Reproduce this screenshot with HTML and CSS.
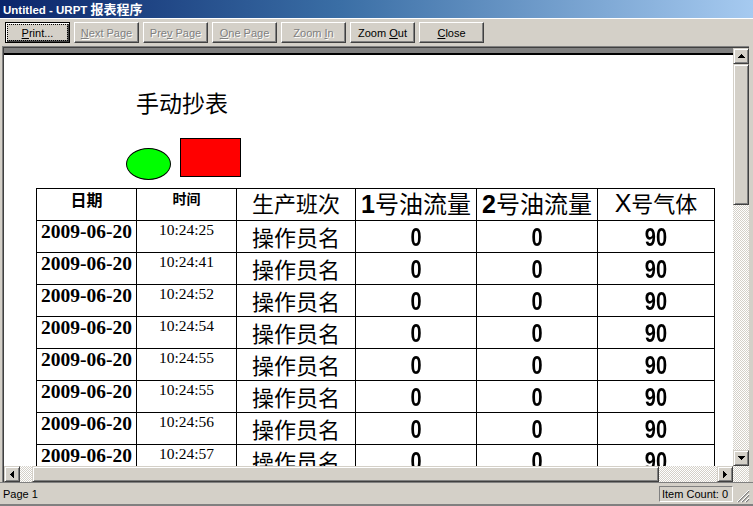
FILE: index.html
```html
<!DOCTYPE html>
<html lang="zh-CN">
<head>
    <meta charset="UTF-8">
    <title>Untitled - URPT 报表程序</title>
    <link rel="stylesheet" href="styles.css">
</head>
<body>
    <div class="window">
        <div class="titlebar">Untitled - URPT <span class="cjk">报表程序</span></div>

        <div class="toolbar">
            <button class="btn default"><u>P</u>rint...</button>
            <button class="btn" disabled><u>N</u>ext Page</button>
            <button class="btn" disabled>Pre<u>v</u> Page</button>
            <button class="btn" disabled><u>O</u>ne Page</button>
            <button class="btn" disabled>Zoom <u>I</u>n</button>
            <button class="btn">Zoom <u>O</u>ut</button>
            <button class="btn"><u>C</u>lose</button>
        </div>

        <div class="viewer">
            <div class="preview">
                <div class="band"></div>
                <div class="page">
                    <h1 class="report-title">手动抄表</h1>
                    <div class="shapes">
                        <div class="ellipse"></div>
                        <div class="rect"></div>
                    </div>
                    <div class="report">
                        <div class="h-date">日期</div>
                        <div class="h-time">时间</div>
                        <div class="h-cjk">生产班次</div>
                        <div class="h-flow"><b>1</b>号油流量</div>
                        <div class="h-flow"><b>2</b>号油流量</div>
                        <div class="h-cjk"><span class="latin">X</span>号气体</div>

                        <div class="date">2009-06-20</div><div class="time">10:24:25</div><div class="name">操作员名</div><div class="num"><span>0</span></div><div class="num"><span>0</span></div><div class="num"><span>90</span></div>
                        <div class="date">2009-06-20</div><div class="time">10:24:41</div><div class="name">操作员名</div><div class="num"><span>0</span></div><div class="num"><span>0</span></div><div class="num"><span>90</span></div>
                        <div class="date">2009-06-20</div><div class="time">10:24:52</div><div class="name">操作员名</div><div class="num"><span>0</span></div><div class="num"><span>0</span></div><div class="num"><span>90</span></div>
                        <div class="date">2009-06-20</div><div class="time">10:24:54</div><div class="name">操作员名</div><div class="num"><span>0</span></div><div class="num"><span>0</span></div><div class="num"><span>90</span></div>
                        <div class="date">2009-06-20</div><div class="time">10:24:55</div><div class="name">操作员名</div><div class="num"><span>0</span></div><div class="num"><span>0</span></div><div class="num"><span>90</span></div>
                        <div class="date">2009-06-20</div><div class="time">10:24:55</div><div class="name">操作员名</div><div class="num"><span>0</span></div><div class="num"><span>0</span></div><div class="num"><span>90</span></div>
                        <div class="date">2009-06-20</div><div class="time">10:24:56</div><div class="name">操作员名</div><div class="num"><span>0</span></div><div class="num"><span>0</span></div><div class="num"><span>90</span></div>
                        <div class="date">2009-06-20</div><div class="time">10:24:57</div><div class="name">操作员名</div><div class="num"><span>0</span></div><div class="num"><span>0</span></div><div class="num"><span>90</span></div>
                    </div>
                </div>
            </div>

            <div class="vscroll">
                <div class="sb-btn"><svg width="7" height="4"><path d="M3 0h1v1h1v1h1v1h1v1H0V3h1V2h1V1h1z"/></svg></div>
                <div class="sb-thumb v-thumb"></div>
                <div class="sb-track"></div>
                <div class="sb-btn"><svg width="7" height="4"><path d="M0 0h7v1H6v1H5v1H4v1H3V3H2V2H1V1H0z"/></svg></div>
            </div>

            <div class="hscroll">
                <div class="sb-btn"><svg width="4" height="7"><path d="M3 0h1v7H3V6H2V5H1V4H0V3h1V2h1V1h1z"/></svg></div>
                <div class="sb-track h-lead"></div>
                <div class="sb-thumb h-thumb"></div>
                <div class="sb-track"></div>
                <div class="sb-btn"><svg width="4" height="7"><path d="M0 0h1v1h1v1h1v1h1v1H3v1H2v1H1v1H0z"/></svg></div>
            </div>

            <div class="sb-track corner"></div>
        </div>

        <div class="statusbar">
            <span class="status-text">Page 1</span>
            <span class="panel">Item Count: 0</span>
            <svg class="grip" width="13" height="13">
                <path d="M12 1L1 12M12 5L5 12M12 9L9 12" stroke="#808080" stroke-width="1.4"/>
                <path d="M12 0L0 12M12 4L4 12M12 8L8 12" stroke="#fff" stroke-width="1"/>
            </svg>
        </div>
    </div>
</body>
</html>
```

FILE: styles.css
```css
body {
    margin: 0;
    background: #d4d0c8;
    font-family: "Liberation Sans", Arial, sans-serif;
    font-size: 11px;
}
.window {
    width: 753px;
    height: 506px;
    display: flex;
    flex-direction: column;
    background: #d4d0c8;
    overflow: hidden;
}
.titlebar {
    height: 18px;
    line-height: 18px;
    padding-left: 3px;
    color: #fff;
    font-weight: bold;
    font-size: 11.5px;
    background: linear-gradient(to right, #0a246a, #3a6ea5 45%, #a6caf0);
    white-space: nowrap;
}
.titlebar .cjk {
    font-family: "Noto Sans CJK SC", sans-serif;
    font-size: 13px;
}

/* toolbar */
.toolbar {
    height: 28px;
    box-sizing: border-box;
    padding: 3px 0 0 5px;
    display: flex;
    gap: 4px;
    border-top: 1px solid #fff;
}
.btn {
    width: 65px;
    height: 21px;
    padding: 0;
    background: #d4d0c8;
    border: 1px solid;
    border-color: #fff #404040 #404040 #fff;
    box-shadow: inset -1px -1px #808080;
    font-family: "Liberation Sans", Arial, sans-serif;
    font-size: 11px;
    color: #000;
}
.btn:disabled {
    color: #808080;
    text-shadow: 1px 1px 0 #fff;
}
.btn.default {
    border-color: #000;
    box-shadow: inset 1px 1px #fff, inset -1px -1px #404040, inset -2px -2px #808080;
    outline: 1px dotted #000;
    outline-offset: -3px;
}

/* viewer */
.viewer {
    flex: 1;
    margin: 0 4px 0 2px;
    border-top: 1px solid #808080;
    border-left: 1px solid #808080;
    padding: 1px 0 0 1px;
    box-shadow: inset 1px 1px #404040;
    display: grid;
    grid-template-columns: 1fr 16px;
    grid-template-rows: 1fr 16px;
    min-height: 0;
}
.preview {
    background: #fff;
    overflow: hidden;
    min-height: 0;
}
.band {
    height: 5px;
    background: #808080;
    border-bottom: 2px solid #000;
}
.page {
    padding: 36px 0 0 32px;
}
.report-title {
    margin: 0 0 0 100px;
    font-family: "Noto Sans CJK SC", sans-serif;
    font-weight: normal;
    font-size: 23px;
    line-height: 23px;
    color: #000;
}
.shapes {
    display: flex;
    align-items: flex-start;
    margin: 24px 0 0 90px;
}
.ellipse {
    width: 45px;
    height: 32px;
    box-sizing: border-box;
    margin-top: 10px;
    border: 1px solid #000;
    border-radius: 50%;
    background: #00ff00;
}
.rect {
    width: 61px;
    height: 39px;
    box-sizing: border-box;
    margin-left: 9px;
    border: 1px solid #000;
    background: #ff0000;
}

/* report table */
.report {
    margin-top: 8px;
    width: max-content;
    display: grid;
    grid-template-columns: 100px 100px 119px 121px 121px 117px;
    grid-auto-rows: 32px;
    border-left: 1px solid #000;
    border-top: 1px solid #000;
    color: #000;
}
.report > div {
    box-sizing: border-box;
    border-right: 1px solid #000;
    border-bottom: 1px solid #000;
    text-align: center;
    white-space: nowrap;
}
.h-date {
    font-family: "Noto Sans CJK SC", sans-serif;
    font-weight: bold;
    font-size: 16px;
    line-height: 20px;
    padding-top: 0;
}
.h-time {
    font-family: "Noto Sans CJK SC", sans-serif;
    font-weight: bold;
    font-size: 14px;
    line-height: 18px;
    padding-top: 0;
}
.h-cjk, .name {
    font-family: "Noto Sans CJK SC", sans-serif;
    font-size: 22px;
    line-height: 26px;
    padding-top: 0;
}
.name {
    padding-top: 2px;
}
.h-flow {
    font-family: "Noto Sans CJK SC", sans-serif;
    font-size: 24px;
    line-height: 28px;
    padding-top: 0;
}
.h-flow b {
    font-family: "Liberation Sans", Arial, sans-serif;
    font-size: 25px;
}
.latin {
    font-family: "Liberation Sans", Arial, sans-serif;
    font-size: 25px;
}
.date {
    font-family: "Liberation Serif", "Times New Roman", serif;
    font-weight: bold;
    font-size: 19.5px;
    line-height: 22px;
}
.time {
    font-family: "Liberation Serif", "Times New Roman", serif;
    font-size: 15.5px;
    line-height: 18px;
}
.num {
    font-family: "Liberation Sans", Arial, sans-serif;
    font-weight: bold;
    font-size: 25px;
    line-height: 29px;
    padding-top: 2px;
}
.num span {
    display: inline-block;
    transform: scaleX(0.8);
}

/* scrollbars */
.vscroll {
    display: flex;
    flex-direction: column;
}
.hscroll {
    display: flex;
}
.sb-btn, .sb-thumb {
    box-sizing: border-box;
    background: #d4d0c8;
    border: 1px solid;
    border-color: #d4d0c8 #404040 #404040 #d4d0c8;
    box-shadow: inset 1px 1px #fff, inset -1px -1px #808080;
}
.sb-btn {
    width: 16px;
    height: 16px;
    flex: none;
    display: flex;
    align-items: center;
    justify-content: center;
}
.sb-btn svg {
    display: block;
}
.sb-track {
    flex: 1;
    background-image: conic-gradient(#fff 25%, #d4d0c8 0 50%, #fff 0 75%, #d4d0c8 0);
    background-size: 2px 2px;
}
.v-thumb {
    height: 141px;
    flex: none;
}
.h-lead {
    flex: none;
    width: 12px;
}
.h-thumb {
    width: 627px;
    flex: none;
}

/* status bar */
.statusbar {
    height: 24px;
    box-sizing: border-box;
    border-top: 1px solid #808080;
    box-shadow: inset 0 -2px #808080;
    display: flex;
    align-items: center;
    padding: 0 3px 2px 3px;
}
.status-text {
    flex: 1;
}
.panel {
    width: 74px;
    height: 16px;
    box-sizing: border-box;
    line-height: 14px;
    padding-left: 2px;
    border: 1px solid;
    border-color: #808080 #fff #fff #808080;
    white-space: nowrap;
}
.grip {
    align-self: flex-end;
    margin: 0 0 1px 4px;
}
```
